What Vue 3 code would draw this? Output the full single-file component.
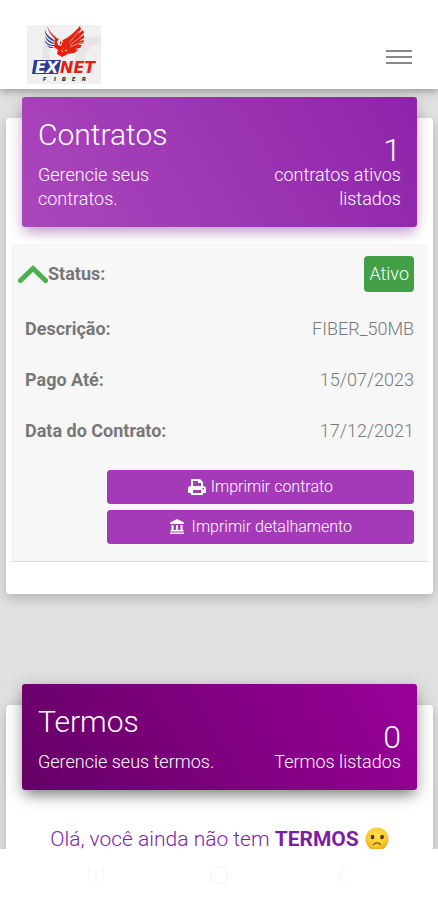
<template>
    <div class="app-shell">
        <header class="navbar">
            <a href="#" class="navbar-brand" aria-label="Exnet Fiber">
                <svg class="logo" viewBox="0 0 74 59" aria-hidden="true">
                    <rect width="74" height="59" fill="#f0f0f0" />
                    <path d="M17 12h17v5H22v17h-7zM38 16l7 0 6 9 7-13h16v8h-9l-8 13 10 15h-8l-7-10-5 10h-7l9-16z" fill="#e6e6e7" />
                    <path d="M20 1C23 8 28 12 34 16l2-1 2 5-2 4 5-1 2 4-4 3-4 2-5-3 1-4-4-3 1-8C25 11 21 6 20 1z" fill="#e4200f" />
                    <path d="M36 15C42 12 48 7 53 1l1 3-3 5 5-4 1 3-5 4 5-2v3l-5 3 5-1-1 3-5 2 4 0-2 3-5 1 3 1-4 3-7 1-3-2z" fill="#e4200f" />
                    <path d="M42 18l10-12M43 20l12-9M43 22l12-5" stroke="#f0f0f0" stroke-width="0.6" />
                    <path d="M30 16l3-2 3 2-2 5-3-1z" fill="#f0f0f0" />
                    <path d="M33 16l2 1-2 3z" fill="#e4200f" />
                    <path d="M34 25l2 2M38 25l2 1" stroke="#fff" stroke-width="1" />
                    <path d="M18 4c0 4 3 7 9 11l1 2C21 14 17 9 18 4zM18 9c0 4 4 7 9 9v1c-6-1-9-5-9-10zM18 15c1 3 5 5 9 5v1c-5 0-9-2-9-6zM20 20c2 2 4 2 7 2-2 2-6 1-7-2z" fill="#303b91" />
                    <path d="M7 35h27l-3 14H5z" fill="#303b91" />
                    <text x="8" y="48" class="logo-name logo-name-light">EX</text>
                    <text x="33" y="48" class="logo-name">NET</text>
                    <text x="16" y="56" class="logo-sub">F</text>
                    <text x="27" y="56" class="logo-sub">I</text>
                    <text x="35" y="56" class="logo-sub">B</text>
                    <text x="45" y="56" class="logo-sub">E</text>
                    <text x="55" y="56" class="logo-sub">R</text>
                </svg>
            </a>
            <button class="navbar-toggler" type="button" aria-label="Menu">
                <span></span>
                <span></span>
                <span></span>
            </button>
        </header>

        <main class="content">
            <section class="card">
                <div class="card-header header-contracts">
                    <div>
                        <h2 class="card-title">Contratos</h2>
                        <p class="card-category">Gerencie seus contratos.</p>
                    </div>
                    <div class="card-summary">
                        <div class="card-count">{{ contracts.length }}</div>
                        <p class="card-category">contratos ativos listados</p>
                    </div>
                </div>

                <div class="contract" v-for="contract in contracts" :key="contract.plan">
                    <div class="contract-row contract-status">
                        <button class="status-toggle" type="button" @click="isOpen = !isOpen">
                            <svg class="chevron" :class="{ closed: !isOpen }" viewBox="0 0 30 20" aria-hidden="true">
                                <path d="M2.500 16.500L15 4.500l12.500 12" />
                            </svg>
                            <strong>Status:</strong>
                        </button>
                        <span class="badge">{{ contract.status }}</span>
                    </div>
                    <template v-if="isOpen">
                        <dl class="contract-details">
                            <div class="contract-row">
                                <dt>Descrição:</dt>
                                <dd>{{ contract.plan }}</dd>
                            </div>
                            <div class="contract-row">
                                <dt>Pago Até:</dt>
                                <dd>{{ contract.paidUntil }}</dd>
                            </div>
                            <div class="contract-row">
                                <dt>Data do Contrato:</dt>
                                <dd>{{ contract.date }}</dd>
                            </div>
                        </dl>
                        <div class="contract-actions">
                            <button class="btn" type="button">
                                <svg class="icon-print" viewBox="0 0 18 18" aria-hidden="true">
                                    <path fill="#fff" fill-rule="evenodd" d="M4 1h8l3 3v4c2 0 3 1 3 3v4h-3v2H3v-2H0v-4c0-2 1-3 3-3V2q0-1 1-1zM5 3v5h8V5h-3V3zM5 12v3h8v-3zM14.500 10v1.500H16V10z" />
                                </svg>
                                Imprimir contrato
                            </button>
                            <button class="btn" type="button">
                                <svg class="icon-bank" viewBox="0 0 16 16" aria-hidden="true">
                                    <path fill="#fff" d="M8 0l7 3.500V5H1V3.500zM2.500 6h2v6h-2zM7 6h2v6H7zM11.500 6h2v6h-2zM1.500 11h13v1.500h-13zM1 13.500h14V15H1z" />
                                </svg>
                                Imprimir detalhamento
                            </button>
                        </div>
                    </template>
                </div>
            </section>

            <section class="card">
                <div class="card-header header-terms">
                    <div>
                        <h2 class="card-title">Termos</h2>
                        <p class="card-category">Gerencie seus termos.</p>
                    </div>
                    <div class="card-summary">
                        <div class="card-count">0</div>
                        <p class="card-category">Termos listados</p>
                    </div>
                </div>
                <p class="empty-message">
                    Olá, você ainda não tem <strong>TERMOS</strong>
                    <svg class="emoji" viewBox="0 0 24 24" role="img" aria-label="Triste">
                        <defs>
                            <radialGradient id="face" cx="0.5" cy="0.35" r="0.65">
                                <stop offset="0" stop-color="#ffe34a" />
                                <stop offset="0.7" stop-color="#fcc62c" />
                                <stop offset="1" stop-color="#eda01f" />
                            </radialGradient>
                        </defs>
                        <circle cx="12" cy="12" r="11.500" fill="url(#face)" />
                        <ellipse cx="7.500" cy="10" rx="1.800" ry="2.200" fill="#422b0d" />
                        <ellipse cx="17" cy="10" rx="1.800" ry="2.200" fill="#422b0d" />
                        <circle cx="7" cy="9.200" r="0.600" fill="#a98b56" />
                        <circle cx="16.500" cy="9.200" r="0.600" fill="#a98b56" />
                        <path d="M8.500 17.500q3.500-3.500 7 0" fill="none" stroke="#60420e" stroke-width="1.100" stroke-linecap="round" />
                    </svg>
                </p>
            </section>
        </main>

        <nav class="system-bar">
            <button type="button" aria-label="Recentes">
                <svg viewBox="0 0 20 20"><path d="M3 3v14M10 3v14M17 3v14" /></svg>
            </button>
            <button type="button" aria-label="Início">
                <svg viewBox="0 0 20 20"><rect x="2" y="2" width="16" height="16" rx="5" /></svg>
            </button>
            <button type="button" aria-label="Voltar">
                <svg viewBox="0 0 20 20"><path d="M14 2l-8 8 8 8" /></svg>
            </button>
        </nav>
    </div>
</template>

<script setup>
import { ref } from 'vue';

const isOpen = ref(true);

const contracts = [
    {
        status: 'Ativo',
        plan: 'FIBER_50MB',
        paidUntil: '15/07/2023',
        date: '17/12/2021'
    }
];
</script>

<style>
body {
    margin: 0;
    background-color: #e0e0e0;
}
</style>

<style scoped>
.app-shell {
    display: flex;
    flex-direction: column;
    height: 100vh;
    font-family: Roboto, "Liberation Sans", sans-serif;
    font-size: 18px;
    font-weight: 300;
    line-height: 24px;
    color: #777;
    background-color: #e0e0e0;
}

button {
    border: none;
    font: inherit;
    cursor: pointer;
}

/* Navbar */
.navbar {
    display: flex;
    align-items: flex-start;
    justify-content: space-between;
    padding: 25px 26px 5px 27px;
    background-color: #fff;
    box-shadow: 0 2px 8px rgba(0, 0, 0, 0.35);
    z-index: 1;
}

.navbar-brand,
.logo {
    display: block;
    width: 74px;
    height: 59px;
}

.logo-name {
    font-family: "DejaVu Sans", sans-serif;
    font-size: 16px;
    font-weight: 700;
    font-style: italic;
    fill: #e4200f;
}

.logo-name-light {
    fill: #fff;
}

.logo-sub {
    font-size: 6px;
    font-weight: 900;
    font-style: italic;
    fill: #222;
}

.navbar-toggler {
    display: flex;
    flex-direction: column;
    gap: 4px;
    width: 26px;
    margin-top: 25px;
    padding: 0;
    background: none;
}

.navbar-toggler span {
    height: 2px;
    background-color: #888;
}

/* Cards */
.content {
    flex: 1;
    min-height: 0;
    overflow: hidden;
    padding: 29px 5px 0 6px;
}

.card {
    display: flow-root;
    margin-bottom: 111px;
    padding-bottom: 32px;
    border-radius: 4px;
    background-color: #fff;
    box-shadow: 0 4px 12px rgba(0, 0, 0, 0.2);
}

.card-header {
    display: grid;
    grid-template-columns: 1fr 1fr;
    margin: -21px 16px 17px;
    padding: 16px;
    border-radius: 3px;
    color: #fff;
}

.header-contracts {
    background: linear-gradient(60deg, #ab47bc, #8e24aa);
    box-shadow: 0 4px 16px rgba(0, 0, 0, 0.14), 0 7px 12px -3px rgba(156, 39, 176, 0.4);
}

.header-terms {
    background: linear-gradient(60deg, #660066, #990099);
    box-shadow: 0 4px 20px rgba(0, 0, 0, 0.2), 0 7px 12px -3px rgba(0, 0, 0, 0.4);
}

.card-title {
    margin: 0 0 6px;
    font-size: 30px;
    font-weight: 300;
    line-height: 44px;
}

.card-summary {
    padding-top: 24px;
    text-align: right;
}

.card-count {
    font-size: 32px;
    line-height: 26px;
}

.card-category {
    margin: 0;
}

/* Contract */
.contract {
    margin: 0 5px;
    padding: 12px 14px 17px;
    border-bottom: 1px solid #ddd;
    background-color: #f7f7f7;
}

.contract-row {
    display: flex;
    align-items: center;
    justify-content: space-between;
}

.contract-details {
    display: grid;
    gap: 27px;
    margin: 25px 0 27px;
}

.contract-details dd {
    margin: 0;
}

.contract-details dt,
.status-toggle strong {
    font-weight: 700;
}

.status-toggle {
    display: flex;
    align-items: center;
    margin-left: -7px;
    padding: 0;
    background: none;
    color: inherit;
}

.chevron {
    width: 30px;
    height: 20px;
}

.chevron.closed {
    transform: rotate(180deg);
}

.chevron path {
    fill: none;
    stroke: #4caf50;
    stroke-width: 5;
    stroke-linecap: round;
}

.badge {
    padding: 6px 5px;
    border-radius: 4px;
    background-color: #43a047;
    color: #fff;
}

.contract-actions {
    display: grid;
    gap: 6px;
    margin-left: 21%;
}

.btn {
    display: flex;
    align-items: center;
    justify-content: center;
    gap: 5px;
    height: 34px;
    padding: 0;
    border-radius: 4px;
    background-color: #a43ab8;
    box-shadow: inset 0 0 1px #7b1fa2;
    font-size: 16px;
    color: #fff;
}

.icon-print {
    width: 18px;
    height: 18px;
}

.icon-bank {
    width: 16px;
    height: 16px;
    margin-right: 2px;
}

.empty-message {
    margin: 35px 0 0;
    font-size: 21px;
    line-height: 28px;
    text-align: center;
    color: #7b1fa2;
}

.empty-message strong {
    font-weight: 700;
}

.emoji {
    width: 24px;
    height: 24px;
    margin-left: 6px;
    vertical-align: -5px;
}

/* System bar */
.system-bar {
    display: flex;
    justify-content: center;
    gap: 103px;
    padding: 16px 0 15px;
    background-color: #fff;
    z-index: 1;
}

.system-bar button {
    padding: 0;
    background: none;
}

.system-bar svg {
    display: block;
    width: 20px;
    height: 20px;
    fill: none;
    stroke: #f3f3f3;
    stroke-width: 1;
}
</style>
